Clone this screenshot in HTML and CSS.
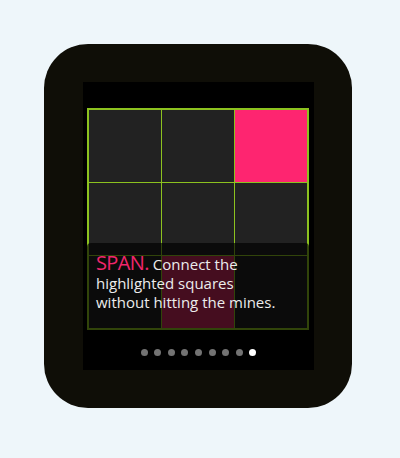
FILE: index.html
```html
<!DOCTYPE html>
<html>
<head>
<meta charset="utf-8">
<link rel="stylesheet" href="styles.css">
</head>
<body>
<div class="watch">
  <div class="screen">
    <div class="board">
      <div class="grid">
        <div class="cell"></div>
        <div class="cell"></div>
        <div class="cell hot"></div>
        <div class="cell"></div>
        <div class="cell"></div>
        <div class="cell"></div>
        <div class="cell"></div>
        <div class="cell mine"></div>
        <div class="cell"></div>
      </div>
      <div class="caption">
        <p><span class="title">SPAN.</span> Connect the<br>highlighted squares<br>without hitting the mines.</p>
      </div>
    </div>
    <div class="dots">
      <span class="dot"></span>
      <span class="dot"></span>
      <span class="dot"></span>
      <span class="dot"></span>
      <span class="dot"></span>
      <span class="dot"></span>
      <span class="dot"></span>
      <span class="dot"></span>
      <span class="dot active"></span>
    </div>
  </div>
</div>
</body>
</html>
```

FILE: styles.css
```css
html, body {
  margin: 0;
  padding: 0;
}
body {
  background: #eef6fa;
  width: 400px;
  height: 458px;
  overflow: hidden;
  font-family: "Open Sans", "Liberation Sans", sans-serif;
}
.watch {
  margin: 44px 0 0 44px;
  width: 308px;
  height: 364px;
  box-sizing: border-box;
  padding: 38px 38px 38px 39px;
  background: #0f0e07;
  border-radius: 44px;
}
.screen {
  width: 231px;
  height: 288px;
  background: #000;
  box-sizing: border-box;
  padding: 26px 0 0 4px;
  display: flex;
  flex-direction: column;
}
.board {
  position: relative;
  width: 222px;
  height: 222px;
}
.grid {
  width: 222px;
  height: 222px;
  box-sizing: border-box;
  display: grid;
  grid-template-columns: repeat(3, 72px);
  grid-template-rows: repeat(3, 72px);
  gap: 1px;
  padding: 2px;
  background: #8cc21f;
}
.cell {
  background: #222222;
}
.cell.hot {
  background: #fe2570;
}
.cell.mine {
  background: #c5255b;
}
.caption {
  position: absolute;
  left: 0;
  right: 0;
  top: 135px;
  bottom: 0;
  background: rgba(0, 0, 0, 0.65);
  border-radius: 4px 4px 0 0;
  padding: 10px 9px 0 9px;
  box-sizing: border-box;
}
.caption p {
  margin: 0;
  color: #ececec;
  font-size: 15px;
  line-height: 19px;
}
.title {
  color: #f0266c;
  font-size: 20px;
  font-weight: 400;
  letter-spacing: -0.6px;
}
.dots {
  margin-top: 19px;
  display: flex;
  justify-content: center;
  gap: 6.6px;
  padding-right: 4px;
}
.dot {
  width: 7px;
  height: 7px;
  border-radius: 50%;
  background: #737373;
}
.dot.active {
  background: #ffffff;
}
```
